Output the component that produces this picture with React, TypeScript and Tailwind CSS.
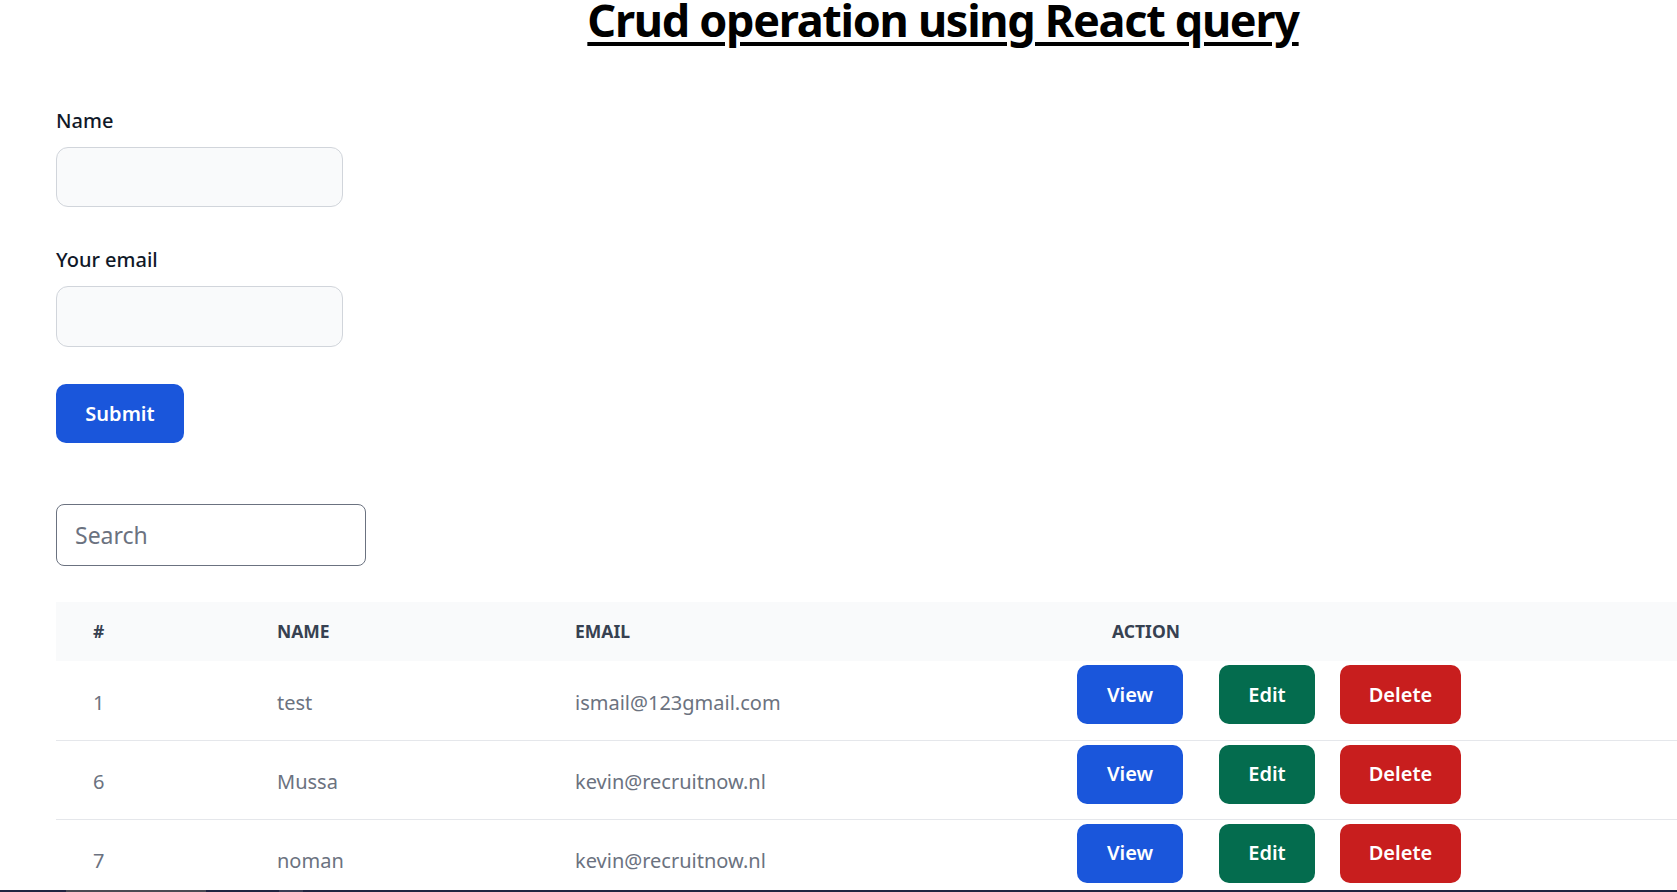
import React from "react";

const rows = [
  { id: 1, name: "test", email: "ismail@123gmail.com" },
  { id: 6, name: "Mussa", email: "kevin@recruitnow.nl" },
  { id: 7, name: "noman", email: "kevin@recruitnow.nl" },
];

export default function App() {
  return (
    <div
      className="relative h-[892px] w-full overflow-hidden bg-white text-gray-900"
      style={{ fontFamily: '"Noto Sans", "Open Sans", sans-serif' }}
    >
      <div className="ml-[400px] w-[1086px] text-center">
        <h1 className="whitespace-nowrap text-[45px] font-bold leading-[39px] tracking-[-1.3px] text-black underline decoration-[4px] underline-offset-[5px]">
          Crud operation using React query
        </h1>
      </div>

      <div className="pl-[56px]">
        <form className="mt-[68px] flex flex-col">
          <label className="text-[20px] font-medium leading-[28px] text-gray-900">Name</label>
          <input
            className="mt-[12px] h-[60px] w-[287px] rounded-[12px] border border-[#d1d5db] bg-[#f9fafb] px-[14px] text-[20px] outline-none"
            type="text"
          />
          <label className="mt-[39px] text-[20px] font-medium leading-[28px] text-gray-900">Your email</label>
          <input
            className="mt-[12px] h-[61px] w-[287px] rounded-[12px] border border-[#d1d5db] bg-[#f9fafb] px-[14px] text-[20px] outline-none"
            type="email"
          />
          <button
            type="button"
            className="mt-[37px] h-[59px] w-[128px] rounded-[10px] bg-[#1a56db] text-[20px] font-semibold text-white"
          >
            Submit
          </button>
        </form>

        <input
          className="mt-[61px] h-[62px] w-[310px] rounded-[8px] border border-[#6b7280] bg-white px-[18px] text-[23px] text-gray-900 outline-none placeholder:text-[#6b7280]"
          placeholder="Search"
        />

        <table className="mt-[36px] w-full border-collapse text-left">
          <thead>
            <tr className="h-[59px] bg-[#f9fafb] text-[17.5px] font-bold uppercase text-[#374151]">
              <th className="w-[184px] pl-[37px] font-bold">#</th>
              <th className="w-[298px] pl-[37px] font-bold">Name</th>
              <th className="w-[502px] pl-[37px] font-bold">Email</th>
              <th className="pl-[72px] font-bold">Action</th>
            </tr>
          </thead>
          <tbody>
            {rows.map((r, i) => (
              <tr key={r.id} className={i < rows.length - 1 ? "h-[79px] border-b border-[#e5e7eb]" : "h-[79px]"}>
                <td className="pl-[37px] pt-[5px] text-[20px] text-[#6b7280]">{r.id}</td>
                <td className="pl-[37px] pt-[5px] text-[20px] text-[#6b7280]">{r.name}</td>
                <td className="pl-[37px] pt-[5px] text-[20px] text-[#6b7280]">{r.email}</td>
                <td className="align-top pt-[4px]">
                  <div className="flex">
                    <button className="ml-[37px] h-[59px] w-[106px] rounded-[10px] bg-[#1a56db] text-[20px] font-semibold text-white">
                      View
                    </button>
                    <button className="ml-[36px] h-[59px] w-[96px] rounded-[10px] bg-[#046c4e] text-[20px] font-semibold text-white">
                      Edit
                    </button>
                    <button className="ml-[25px] h-[59px] w-[121px] rounded-[10px] bg-[#c81e1e] text-[20px] font-semibold text-white">
                      Delete
                    </button>
                  </div>
                </td>
              </tr>
            ))}
          </tbody>
        </table>
      </div>

      <div className="absolute bottom-0 left-0 flex h-[2px] w-full">
        <div className="w-[66px] bg-[#1f2340]" />
        <div className="w-[140px] bg-[#4a4a52]" />
        <div className="w-[73px] bg-[#1f2340]" />
        <div className="w-[24px] bg-[#3a3d55]" />
        <div className="flex-1 bg-[#1f2340]" />
      </div>
    </div>
  );
}
